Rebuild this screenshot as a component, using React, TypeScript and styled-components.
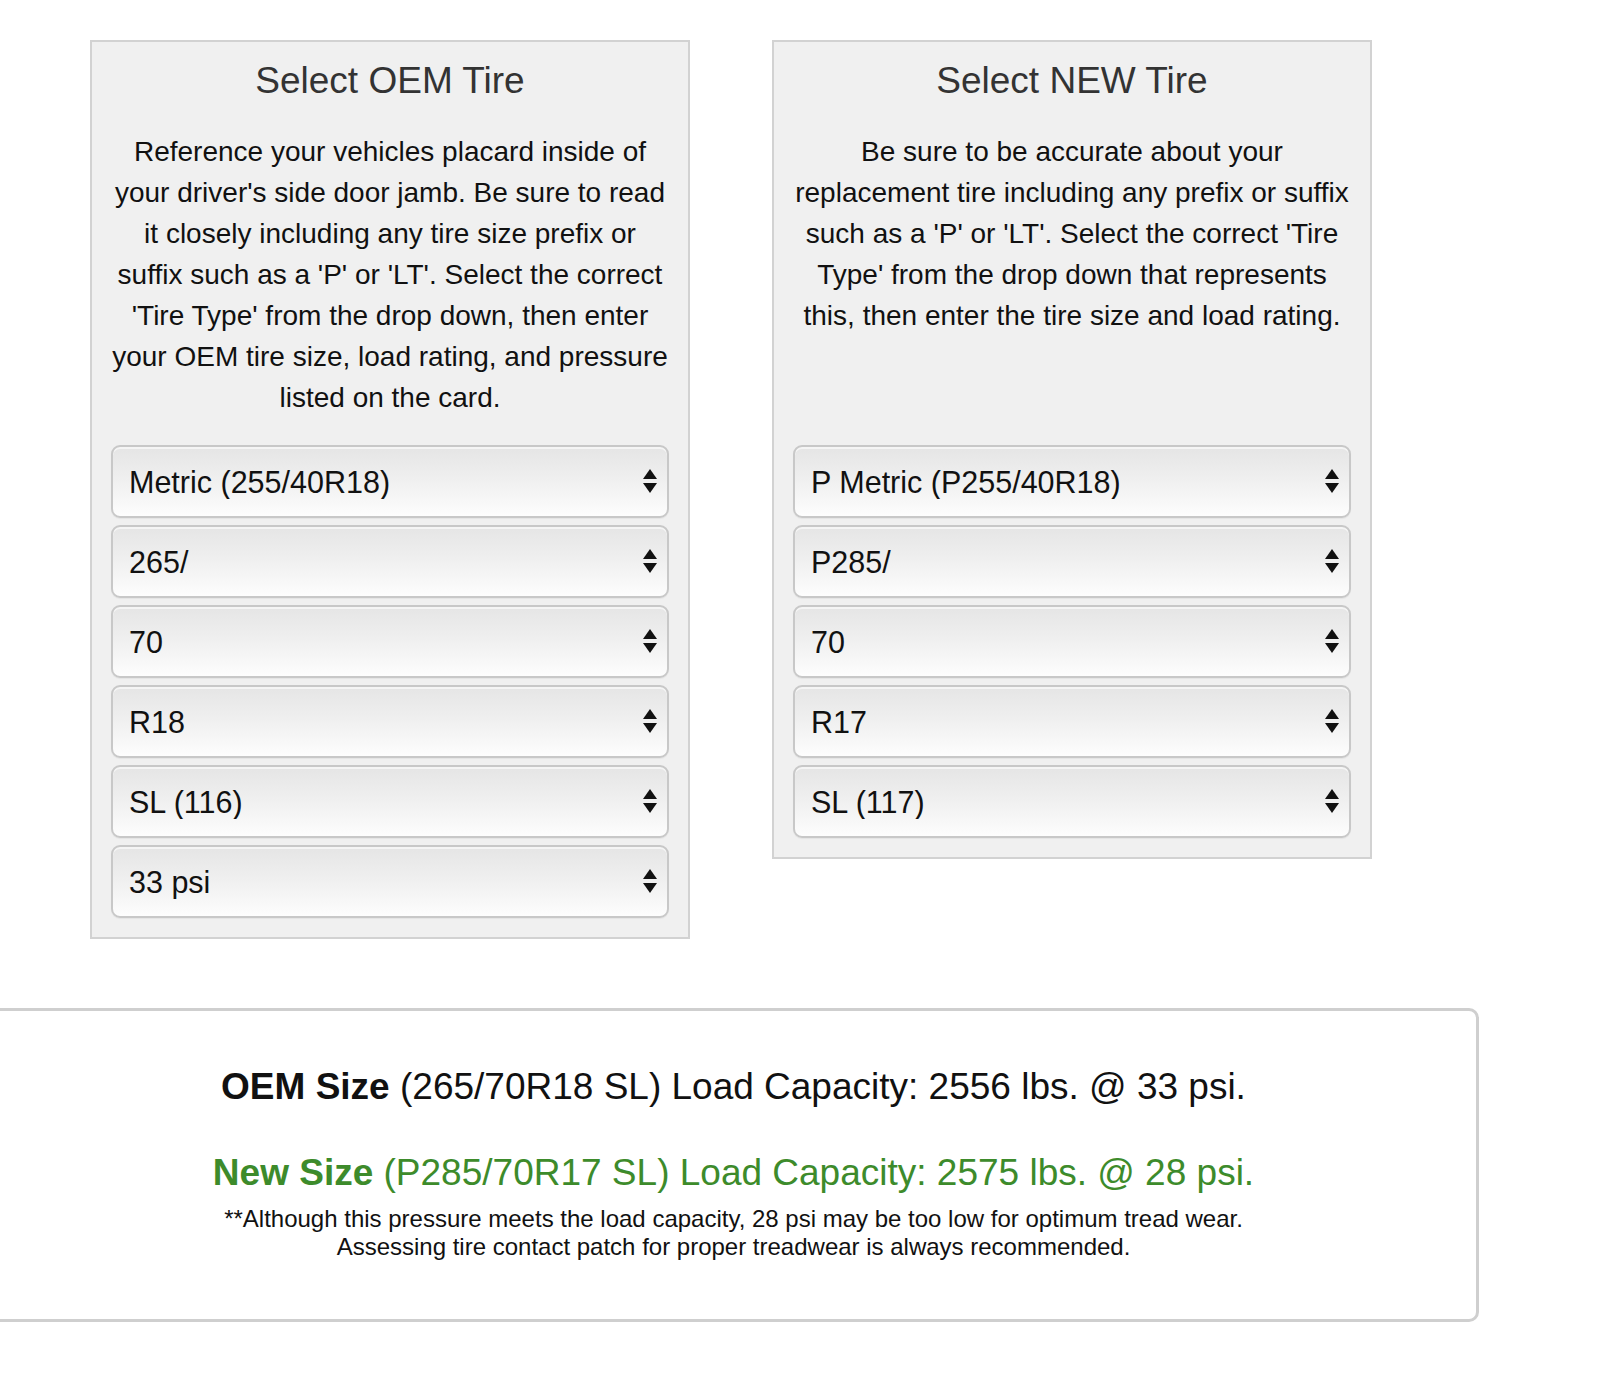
import * as React from "react";
import styled, { createGlobalStyle } from "styled-components";

const GlobalStyle = createGlobalStyle`
  html, body {
    margin: 0;
    padding: 0;
    background: #fff;
  }
  body {
    font-family: "Liberation Sans", Arial, Helvetica, sans-serif;
    color: #111;
    overflow-x: hidden;
  }
`;

const oemSelects = [
  "Metric (255/40R18)",
  "265/",
  "70",
  "R18",
  "SL (116)",
  "33 psi",
];

const newSelects = ["P Metric (P255/40R18)", "P285/", "70", "R17", "SL (117)"];

export default function App() {
  return (
    <Page>
      <GlobalStyle />
      <Panels>
        <Panel>
          <PanelTitle>Select OEM Tire</PanelTitle>
          <Description>
            Reference your vehicles placard inside of your driver's side door
            jamb. Be sure to read it closely including any tire size prefix or
            suffix such as a 'P' or 'LT'. Select the correct 'Tire Type' from
            the drop down, then enter your OEM tire size, load rating, and
            pressure listed on the card.
          </Description>
          <SelectList>
            {oemSelects.map((v) => (
              <TireSelect key={v} value={v} />
            ))}
          </SelectList>
        </Panel>

        <Panel>
          <PanelTitle>Select NEW Tire</PanelTitle>
          <Description>
            Be sure to be accurate about your replacement tire including any
            prefix or suffix such as a 'P' or 'LT'. Select the correct 'Tire
            Type' from the drop down that represents this, then enter the tire
            size and load rating.
          </Description>
          <SelectList>
            {newSelects.map((v) => (
              <TireSelect key={v} value={v} />
            ))}
          </SelectList>
        </Panel>
      </Panels>

      <Results>
        <ResultLine>
          <strong>OEM Size</strong> (265/70R18 SL) Load Capacity: 2556 lbs. @
          33 psi.
        </ResultLine>
        <ResultLine $green>
          <strong>New Size</strong> (P285/70R17 SL) Load Capacity: 2575 lbs. @
          28 psi.
        </ResultLine>
        <Note>
          **Although this pressure meets the load capacity, 28 psi may be too
          low for optimum tread wear.
          <br />
          Assessing tire contact patch for proper treadwear is always
          recommended.
        </Note>
      </Results>
    </Page>
  );
}

function TireSelect({ value }: { value: string }) {
  return (
    <SelectWrap>
      <Select defaultValue={value}>
        <option value={value}>{value}</option>
      </Select>
      <Arrows viewBox="0 0 14 26" width="14" height="26">
        <path d="M7 0 L14 10 L0 10 Z" fill="#111" />
        <path d="M0 14 L14 14 L7 24 Z" fill="#111" />
      </Arrows>
    </SelectWrap>
  );
}

const Page = styled.main`
  width: 1600px;
  padding-top: 40px;
  padding-bottom: 50px;
`;

const Panels = styled.div`
  display: flex;
  align-items: flex-start;
  gap: 82px;
  padding-left: 90px;
`;

const Panel = styled.section`
  box-sizing: border-box;
  width: 600px;
  background: #f0f0f0;
  border: 2px solid #d2d2d2;
  padding: 19px 19px 19px;
`;

const PanelTitle = styled.h2`
  margin: 0 0 30px;
  font-size: 37px;
  line-height: 40px;
  font-weight: normal;
  text-align: center;
  color: #333;
`;

const Description = styled.p`
  margin: 0 0 27px;
  min-height: 287px;
  font-size: 28px;
  line-height: 41px;
  text-align: center;
  color: #111;
`;

const SelectList = styled.div`
  display: flex;
  flex-direction: column;
  gap: 7px;
`;

const SelectWrap = styled.div`
  position: relative;
`;

const Select = styled.select`
  appearance: none;
  -webkit-appearance: none;
  box-sizing: border-box;
  display: block;
  width: 100%;
  height: 73px;
  padding: 0 50px 0 16px;
  border: 2px solid #c8c8c8;
  border-radius: 9px;
  background: linear-gradient(#e5e5e5 0%, #f0f0f0 50%, #fdfdfd 100%);
  box-shadow: inset 0 2px 0 rgba(255, 255, 255, 0.6),
    0 1px 1px rgba(0, 0, 0, 0.05);
  font-family: "Liberation Sans", Arial, Helvetica, sans-serif;
  font-size: 30.5px;
  color: #111;
  outline: none;
`;

const Arrows = styled.svg`
  position: absolute;
  right: 12px;
  top: 50%;
  transform: translateY(-50%);
  pointer-events: none;
`;

const Results = styled.section`
  box-sizing: border-box;
  width: 1491px;
  margin: 69px 0 0 -12px;
  border: 3px solid #cfcfcf;
  border-radius: 10px;
  padding: 54px 20px 58px;
  text-align: center;
`;

const ResultLine = styled.p<{ $green?: boolean }>`
  margin: 0 0 42px;
  font-size: 37px;
  line-height: 44px;
  color: ${(p) => (p.$green ? "#3d8b2b" : "#111")};

  &:nth-of-type(2) {
    margin-bottom: 10px;
  }

  strong {
    font-weight: bold;
  }
`;

const Note = styled.p`
  margin: 0;
  font-size: 24px;
  line-height: 28px;
  color: #111;
`;
